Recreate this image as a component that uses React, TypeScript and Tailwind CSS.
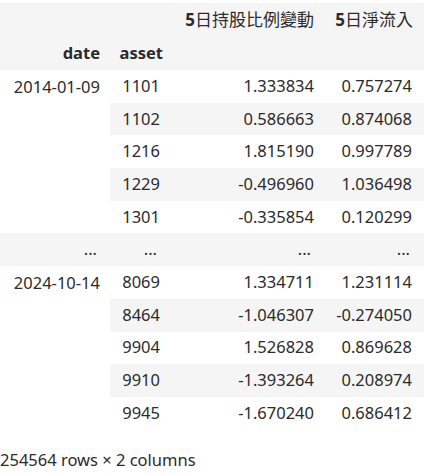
const rowsTop = [
  ["1101", "1.333834", "0.757274"],
  ["1102", "0.586663", "0.874068"],
  ["1216", "1.815190", "0.997789"],
  ["1229", "-0.496960", "1.036498"],
  ["1301", "-0.335854", "0.120299"],
];

const rowsBottom = [
  ["8069", "1.334711", "1.231114"],
  ["8464", "-1.046307", "-0.274050"],
  ["9904", "1.526828", "0.869628"],
  ["9910", "-1.393264", "0.208974"],
  ["9945", "-1.670240", "0.686412"],
];

function Group({ date, rows }: { date: string; rows: string[][] }) {
  return (
    <>
      {rows.map((r, i) => (
        <tr key={r[0]} className="h-[32.7px]">
          {i === 0 && (
            <th rowSpan={rows.length} className="align-top pt-[5px] pr-[10px] text-right font-normal bg-white">
              {date}
            </th>
          )}
          <th className={`pr-[10px] text-right font-normal ${i % 2 === 1 ? "bg-[#f5f5f5]" : ""}`}>{r[0]}</th>
          <td className={`pr-[8px] text-right ${i % 2 === 1 ? "bg-[#f5f5f5]" : ""}`}>{r[1]}</td>
          <td className={`pr-[12px] text-right ${i % 2 === 1 ? "bg-[#f5f5f5]" : ""}`}>{r[2]}</td>
        </tr>
      ))}
    </>
  );
}

export default function App() {
  return (
    <div
      className="bg-white w-[438px] h-[474px] pt-[3px] text-[16.5px] text-[#2b2b2b]"
      style={{ fontFamily: '"Noto Sans", "Noto Sans CJK TC", sans-serif' }}
    >
      <table className="border-collapse table-fixed w-[424px] whitespace-nowrap">
        <colgroup>
          <col className="w-[110px]" />
          <col className="w-[60px]" />
          <col className="w-[152px]" />
          <col className="w-[102px]" />
        </colgroup>
        <thead>
          <tr className="h-[34px] bg-[#f5f5f5]">
            <th></th>
            <th></th>
            <th className="pr-[8px] text-right font-normal text-[17px]">
              <span className="font-bold">5</span>日持股比例變動
            </th>
            <th className="pr-[11px] text-right font-normal text-[17px]">
              <span className="font-bold">5</span>日淨流入
            </th>
          </tr>
          <tr className="h-[33px] bg-[#f5f5f5]">
            <th className="pr-[10px] text-right font-bold">date</th>
            <th className="pr-[7px] text-right font-bold">asset</th>
            <th></th>
            <th></th>
          </tr>
        </thead>
        <tbody>
          <Group date="2014-01-09" rows={rowsTop} />
          <tr className="h-[32.7px] bg-[#f5f5f5]">
            <th className="pr-[13px] text-right font-normal">...</th>
            <th className="pr-[13px] text-right font-normal">...</th>
            <td className="pr-[11px] text-right">...</td>
            <td className="pr-[14px] text-right">...</td>
          </tr>
          <Group date="2024-10-14" rows={rowsBottom} />
        </tbody>
      </table>
      <p className="mt-[18px]">254564 rows × 2 columns</p>
    </div>
  );
}
